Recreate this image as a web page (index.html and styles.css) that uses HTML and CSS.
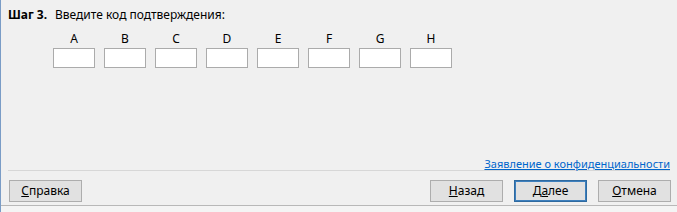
FILE: index.html
```html
<!DOCTYPE html>
<html lang="ru">
<head>
<meta charset="utf-8">
<link rel="stylesheet" href="styles.css">
</head>
<body>
<div class="dialog">
  <div class="step"><span class="step-num">Шаг 3.</span><span class="step-text">Введите код подтверждения:</span></div>
  <div class="codes">
    <div class="code"><span class="label">A</span><span class="box"></span></div>
    <div class="code"><span class="label">B</span><span class="box"></span></div>
    <div class="code"><span class="label">C</span><span class="box"></span></div>
    <div class="code"><span class="label">D</span><span class="box"></span></div>
    <div class="code"><span class="label">E</span><span class="box"></span></div>
    <div class="code"><span class="label">F</span><span class="box"></span></div>
    <div class="code"><span class="label">G</span><span class="box"></span></div>
    <div class="code"><span class="label">H</span><span class="box"></span></div>
  </div>
  <div class="spacer"></div>
  <div class="link-row"><a class="privacy" href="#">Заявление о конфиденциальности</a></div>
  <div class="separator"></div>
  <div class="buttons">
    <button class="btn"><u>С</u>правка</button>
    <div class="right-buttons">
      <button class="btn"><u>Н</u>азад</button>
      <button class="btn default">Д<u>а</u>лее</button>
      <button class="btn"><u>О</u>тмена</button>
    </div>
  </div>
  <div class="bottom-edge"></div>
</div>
</body>
</html>
```
FILE: styles.css
```css
html, body {
  margin: 0;
  padding: 0;
  background: #f0f0f0;
}
body {
  width: 677px;
  height: 212px;
  overflow: hidden;
  font-family: "Noto Sans", "Open Sans", "Liberation Sans", sans-serif;
  font-size: 12px;
  color: #000;
}
.dialog {
  box-sizing: border-box;
  height: 212px;
  display: flex;
  flex-direction: column;
  border-left: 1px solid #7a9cc6;
}
.step {
  padding: 7px 0 0 7px;
  line-height: 16px;
  display: flex;
}
.step-num {
  font-weight: bold;
  width: 47px;
}
.codes {
  display: flex;
  gap: 9px;
  margin: 8px 0 0 52px;
}
.code {
  display: flex;
  flex-direction: column;
  align-items: center;
  width: 42px;
}
.label {
  line-height: 16px;
  height: 16px;
  margin-bottom: 1px;
}
.box {
  box-sizing: border-box;
  width: 42px;
  height: 20px;
  background: #fff;
  border: 1px solid #ababab;
}
.spacer {
  flex: 1;
}
.link-row {
  display: flex;
  justify-content: flex-end;
  padding-right: 7px;
  font-size: 11px;
  line-height: 14px;
  height: 14px;
}
.privacy {
  color: #0066cc;
  text-decoration: underline;
  position: relative;
  top: 1px;
}
.separator {
  height: 1px;
  background: #d7d7d7;
  margin: 0 7px 0 7px;
}
.buttons {
  display: flex;
  justify-content: space-between;
  padding: 9px 6px 0 8px;
}
.right-buttons {
  display: flex;
  gap: 11px;
}
.btn {
  box-sizing: border-box;
  width: 73px;
  height: 22px;
  margin: 0;
  padding: 0;
  font: inherit;
  line-height: 18px;
  color: #000;
  background: #e1e1e1;
  border: 1px solid #adadad;
  border-radius: 0;
}
.btn.default {
  border: 1px solid #2f6aa0;
  box-shadow: inset 0 0 0 1px #3d7fbd;
}
.bottom-edge {
  margin-top: 3px;
  height: 6px;
  border-top: 1px solid #b8b8b8;
  background: #f4f4f4;
}
```
